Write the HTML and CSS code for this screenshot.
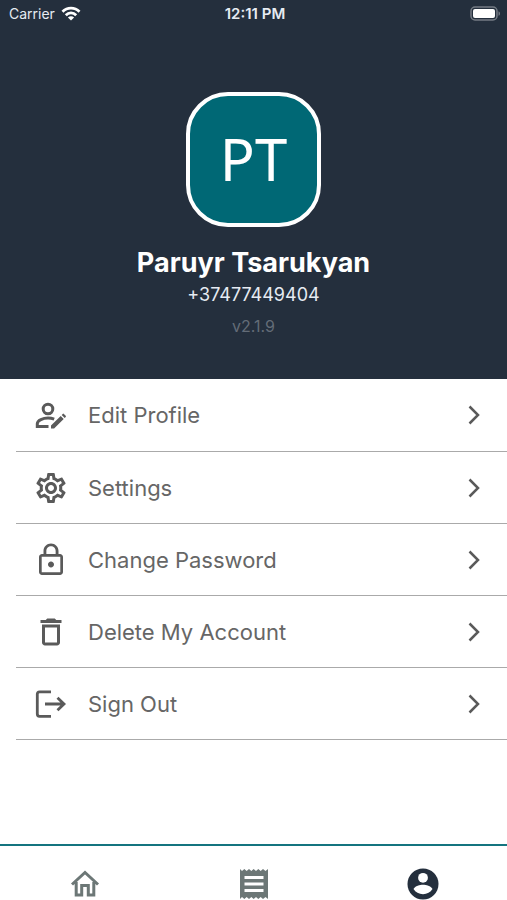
FILE: index.html
```html
<!DOCTYPE html>
<html lang="en">
<head>
<meta charset="utf-8">
<meta name="viewport" content="width=device-width, initial-scale=1">
<title>Profile</title>
<link rel="stylesheet" href="styles.css">
</head>
<body>
<header class="hero">
  <div class="status">
    <div class="status-left">
      <span>Carrier</span>
      <svg class="wifi" viewBox="0 0 20 15" aria-hidden="true"><g fill="none" stroke="currentColor" stroke-width="2.8"><path d="M1.5 5.8C6.3 1 13.7 1 18.5 5.8"/><path d="M4.8 9.2c3-3 7.4-3 10.4 0"/></g><path fill="currentColor" d="M6.9 11.4c1.8-1.7 4.4-1.7 6.2 0L10 14.5z"/></svg>
    </div>
    <span class="time">12:11 PM</span>
    <div class="status-right">
      <svg class="battery" viewBox="0 0 31 15" aria-hidden="true"><rect x="1" y="1" width="26" height="13" rx="4" fill="none" stroke="#747b84" stroke-width="1.5"/><rect x="3" y="3" width="22" height="9" rx="2" fill="#fff"/><path d="M28.5 5.2c2 .8 2 3.8 0 4.6z" fill="#747b84"/></svg>
    </div>
  </div>
  <div class="avatar">PT</div>
  <h1 class="name">Paruyr Tsarukyan</h1>
  <p class="phone">+37477449404</p>
  <p class="version">v2.1.9</p>
</header>
<main class="menu">
  <a class="row" href="#edit">
    <svg class="icon" viewBox="0 0 36 36" aria-hidden="true"><g fill="none" stroke="currentColor" stroke-width="3"><circle cx="15" cy="12" r="4.8"/><path d="M15.5 29.400H4.300v-2.700c0-3.700 6-5.600 10.700-5.600 2.100 0 4.300.4 6.200 1.100"/></g><path fill="currentColor" d="M18 28.400 27.700 18.900 30.700 21.900 21.100 31.400H18zM28.700 17.900l1-1q.6-.6 1.200 0l1.800 1.800q.6.6 0 1.200l-1 1z"/></svg>
    <span class="label">Edit Profile</span>
    <svg class="chevron" viewBox="0 0 14 22" aria-hidden="true"><path d="M2.500 2.500 11 11l-8.500 8.500"/></svg>
  </a>
  <a class="row" href="#settings">
    <svg class="icon" viewBox="0 0 24 24" aria-hidden="true"><path fill="currentColor" d="M19.43 12.98c.04-.32.07-.64.07-.98 0-.34-.03-.66-.07-.98l2.110-1.650c.19-.15.24-.42.12-.64l-2-3.460c-.09-.16-.26-.25-.44-.25-.06 0-.12.010-.17.030l-2.490 1c-.52-.4-1.080-.73-1.690-.98l-.38-2.650C14.460 2.180 14.250 2 14 2h-4c-.25 0-.46.18-.49.42l-.38 2.650c-.61.25-1.170.59-1.690.98l-2.490-1c-.06-.020-.12-.030-.18-.030-.17 0-.34.090-.43.25l-2 3.460c-.13.22-.070.49.12.64l2.110 1.650c-.040.32-.070.65-.070.98s.030.66.070.98l-2.110 1.650c-.19.15-.24.42-.12.64l2 3.460c.090.16.26.25.44.25.060 0 .12-.010.17-.030l2.490-1c.52.4 1.080.73 1.690.98l.38 2.650c.030.24.24.42.49.42h4c.25 0 .46-.18.49-.42l.38-2.650c.61-.25 1.170-.59 1.690-.98l2.490 1c.060.020.12.030.18.030.17 0 .34-.090.43-.25l2-3.460c.12-.22.070-.49-.12-.64l-2.110-1.650zm-1.980-1.710c.040.31.050.52.050.73s-.020.43-.050.73l-.14 1.130.89.7 1.080.84-.7 1.210-1.270-.51-1.040-.42-.9.68c-.43.32-.84.56-1.250.73l-1.060.43-.16 1.130-.2 1.350h-1.400l-.19-1.350-.16-1.130-1.060-.43c-.43-.18-.83-.41-1.230-.71l-.91-.7-1.060.43-1.270.51-.7-1.210 1.080-.84.89-.7-.14-1.130c-.030-.31-.050-.54-.050-.74s.020-.43.050-.73l.14-1.130-.89-.7-1.080-.84.7-1.210 1.270.51 1.040.42.9-.68c.43-.32.84-.56 1.250-.73l1.060-.43.16-1.130.2-1.350h1.390l.19 1.350.16 1.130 1.060.43c.43.18.83.41 1.230.71l.91.7 1.060-.43 1.270-.51.7 1.210-1.070.85-.89.7.14 1.130zM12 8c-2.210 0-4 1.790-4 4s1.790 4 4 4 4-1.790 4-4-1.790-4-4-4zm0 6c-1.100 0-2-.9-2-2s.9-2 2-2 2 .9 2 2-.9 2-2 2z"/></svg>
    <span class="label">Settings</span>
    <svg class="chevron" viewBox="0 0 14 22" aria-hidden="true"><path d="M2.500 2.500 11 11l-8.500 8.500"/></svg>
  </a>
  <a class="row" href="#password">
    <svg class="icon" viewBox="0 0 24 24" aria-hidden="true"><path fill="currentColor" d="M12 17c1.100 0 2-.9 2-2s-.9-2-2-2-2 .9-2 2 .9 2 2 2zm6-9h-1V6c0-2.760-2.240-5-5-5S7 3.240 7 6v2H6c-1.100 0-2 .9-2 2v10c0 1.100.9 2 2 2h12c1.100 0 2-.9 2-2V10c0-1.100-.9-2-2-2zM8.900 6c0-1.710 1.390-3.100 3.100-3.100s3.100 1.390 3.100 3.100v2H8.900V6zM18.200 20.200H5.800V9.800h12.400v10.400z"/></svg>
    <span class="label">Change Password</span>
    <svg class="chevron" viewBox="0 0 14 22" aria-hidden="true"><path d="M2.500 2.500 11 11l-8.500 8.500"/></svg>
  </a>
  <a class="row" href="#delete">
    <svg class="icon" viewBox="0 0 24 24" aria-hidden="true"><path fill="currentColor" d="M6 19c0 1.100.9 2 2 2h8c1.100 0 2-.9 2-2V7H6v12zM8 9h8v10H8V9zm7.500-5l-1-1h-5l-1 1H5v2h14V4h-3.500z"/></svg>
    <span class="label">Delete My Account</span>
    <svg class="chevron" viewBox="0 0 14 22" aria-hidden="true"><path d="M2.500 2.500 11 11l-8.500 8.500"/></svg>
  </a>
  <a class="row" href="#signout">
    <svg class="icon" viewBox="0 0 36 36" aria-hidden="true"><g fill="none" stroke="currentColor" stroke-width="2.800"><path d="M18 5.900H6.500q-2.200 0-2.200 2.200v20q0 2.200 2.200 2.200H18M12 18h19M24.500 11.700 31 18l-6.500 6.300"/></g></svg>
    <span class="label">Sign Out</span>
    <svg class="chevron" viewBox="0 0 14 22" aria-hidden="true"><path d="M2.500 2.500 11 11l-8.500 8.500"/></svg>
  </a>
</main>
<nav class="tabs" aria-label="Main">
  <a class="tab" href="#home" aria-label="Home"><svg viewBox="0 0 32 32" aria-hidden="true"><path fill="none" stroke="currentColor" stroke-width="3" d="M3 16.500 16 4.500l13 12M7.200 14v13h5.500v-9.500h6.600v9.500h5.500V14"/></svg></a>
  <a class="tab" href="#orders" aria-label="Orders"><svg viewBox="0 0 32 32" aria-hidden="true"><path fill="currentColor" fill-rule="evenodd" d="M2 1l2 2 2.330-2 2.330 2L11 1l2.330 2 2.330-2L18 3l2.330-2 2.330 2L25 1l2.500 2L30 1v30l-2.500-2-2.500 2-2.340-2-2.330 2L18 29l-2.340 2-2.330-2L11 31l-2.340-2-2.330 2L4 29l-2 2zM6.500 8v3h19V8zM6.500 14.500v3h19v-3zM6.500 21v3h19v-3z"/></svg></a>
  <a class="tab active" href="#profile" aria-label="Profile" aria-current="page"><svg viewBox="0 0 32 32" aria-hidden="true"><circle cx="16" cy="16" r="15.500" fill="currentColor"/><circle cx="16" cy="9.800" r="4.900" fill="#fff"/><path fill="#fff" d="M6.500 21c1.600-3.200 6.400-4.300 9.500-4.300s7.900 1.100 9.500 4.300c-2 3.400-5.500 5.200-9.500 5.200S8.500 24.400 6.500 21z"/></svg></a>
</nav>
</body>
</html>
```
FILE: styles.css
```css
* {
  box-sizing: border-box;
}

body {
  margin: 0;
  min-height: 100vh;
  display: flex;
  flex-direction: column;
  background: #fff;
  font-family: Inter, "Liberation Sans", sans-serif;
}

.hero {
  display: flex;
  flex-direction: column;
  align-items: center;
  padding-bottom: 42px;
  background: #242f3d;
  color: #fff;
}

.status {
  align-self: stretch;
  display: grid;
  grid-template-columns: 1fr auto 1fr;
  align-items: center;
  height: 26px;
  padding: 0 6px 0 9px;
  font-size: 14px;
  color: #e6ebf2;
}

.status-left {
  display: flex;
  align-items: center;
  gap: 6px;
}

.status-right {
  display: flex;
  justify-content: flex-end;
}

.wifi {
  width: 20px;
  height: 15px;
  color: #fff;
}

.battery {
  width: 31px;
  height: 15px;
}

.time {
  font-size: 15px;
  font-weight: 600;
}

.avatar {
  display: flex;
  align-items: center;
  justify-content: center;
  width: 135px;
  height: 135px;
  margin-top: 66px;
  padding-bottom: 2px;
  border: 4px solid #fff;
  border-radius: 42px;
  background: #006875;
  font-family: "Noto Sans", sans-serif;
  font-size: 58px;
}

.name {
  margin: 20px 0 0;
  font-size: 27px;
  line-height: 32px;
  font-weight: 700;
}

.phone {
  margin: 4px 0 0;
  font-size: 18px;
  line-height: 24px;
  color: #e6ebf2;
}

.version {
  margin: 8px 0 0;
  font-size: 16px;
  line-height: 22px;
  color: #636c77;
}

.menu {
  flex: 1;
  padding-left: 16px;
}

.row {
  display: flex;
  align-items: center;
  gap: 19px;
  height: 72px;
  padding: 0 26px 0 17px;
  border-bottom: 1px solid #aaa;
  color: #5a5a5a;
  text-decoration: none;
}

.row:first-child {
  height: 73px;
}

.icon {
  width: 36px;
  height: 36px;
}

.label {
  flex: 1;
  font-size: 22px;
  color: #666;
}

.chevron {
  width: 14px;
  height: 22px;
  fill: none;
  stroke: #5a5a5a;
  stroke-width: 2.500;
}

.tabs {
  display: grid;
  grid-template-columns: repeat(3, 1fr);
  height: 56px;
  padding-top: 22px;
  border-top: 2px solid #14747f;
}

.tab {
  display: flex;
  justify-content: center;
  color: #6c7776;
}

.tab svg {
  width: 32px;
  height: 32px;
}

.active {
  color: #242f3d;
}
```
